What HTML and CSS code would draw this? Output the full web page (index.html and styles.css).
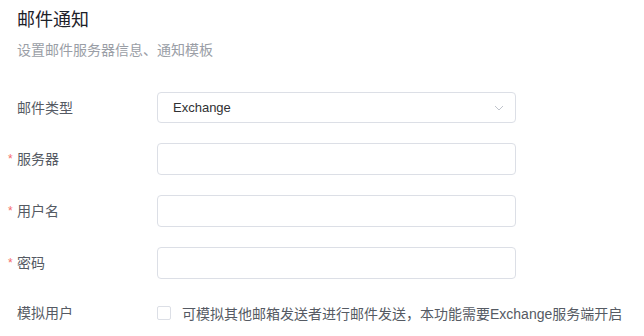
FILE: index.html
```html
<!DOCTYPE html>
<html lang="zh-CN">
<head>
    <meta charset="UTF-8">
    <meta name="viewport" content="width=device-width, initial-scale=1.0">
    <title>邮件通知</title>
    <link rel="stylesheet" href="styles.css">
</head>
<body>
    <div class="page">
        <div class="page-header">
            <h1>邮件通知</h1>
            <p>设置邮件服务器信息、通知模板</p>
        </div>
        <form class="mail-form">
            <div class="form-row row-select">
                <label class="form-label"><span class="star"></span>邮件类型</label>
                <div class="select">
                    <span class="select-value">Exchange</span>
                    <svg class="chevron" width="10" height="6" viewBox="0 0 10 6">
                        <path d="M1 1l4 4 4-4" fill="none" stroke="#c0c4cc" stroke-width="1"/>
                    </svg>
                </div>
            </div>
            <div class="form-row">
                <label class="form-label"><span class="star">*</span>服务器</label>
                <input class="input" type="text">
            </div>
            <div class="form-row">
                <label class="form-label"><span class="star">*</span>用户名</label>
                <input class="input" type="text">
            </div>
            <div class="form-row">
                <label class="form-label"><span class="star">*</span>密码</label>
                <input class="input" type="password">
            </div>
            <div class="form-row row-check">
                <label class="form-label"><span class="star"></span>模拟用户</label>
                <label class="check">
                    <span class="check-box"></span>
                    <span>可模拟其他邮箱发送者进行邮件发送，本功能需要Exchange服务端开启</span>
                </label>
            </div>
        </form>
    </div>
</body>
</html>
```

FILE: styles.css
```css
body {
    margin: 0;
    background-color: #ffffff;
    font-family: "Liberation Sans", "Noto Sans CJK SC", sans-serif;
    color: #303133;
}
.page {
    padding-top: 7px;
}
.page-header {
    padding-left: 17px;
}
.page-header h1 {
    margin: 0;
    font-size: 18px;
    line-height: 27px;
    font-weight: normal;
    color: #1d2129;
}
.page-header p {
    margin: 5px 0 0;
    font-size: 14px;
    line-height: 22px;
    color: #9a9ea6;
}
.mail-form {
    margin-top: 31px;
    display: flex;
    flex-direction: column;
    gap: 20px;
}
.form-row {
    display: flex;
    align-items: center;
    height: 32px;
}
.row-select {
    height: 31px;
}
.row-check {
    height: 28px;
}
.form-label {
    width: 149px;
    padding-left: 8px;
    padding-bottom: 2px;
    display: flex;
    align-items: center;
    font-size: 14px;
    color: #555a63;
}
.star {
    width: 9px;
    color: #f56c6c;
    font-size: 12px;
    line-height: 1;
    padding-top: 2px;
}
.select,
.input {
    box-sizing: border-box;
    width: 359px;
    height: 32px;
    border: 1px solid #dcdfe6;
    border-radius: 4px;
    background-color: #ffffff;
}
.select {
    height: 31px;
    display: flex;
    align-items: center;
    justify-content: space-between;
    padding: 0 11px 0 15px;
}
.select-value {
    font-size: 13px;
    color: #303133;
}
.input {
    padding: 0 15px;
    font-size: 13px;
    outline: none;
}
.check {
    display: flex;
    align-items: center;
    gap: 11px;
    font-size: 14px;
    color: #555a63;
}
.check-box {
    box-sizing: border-box;
    width: 14px;
    height: 14px;
    border: 1px solid #dcdfe6;
    border-radius: 2px;
}
```
